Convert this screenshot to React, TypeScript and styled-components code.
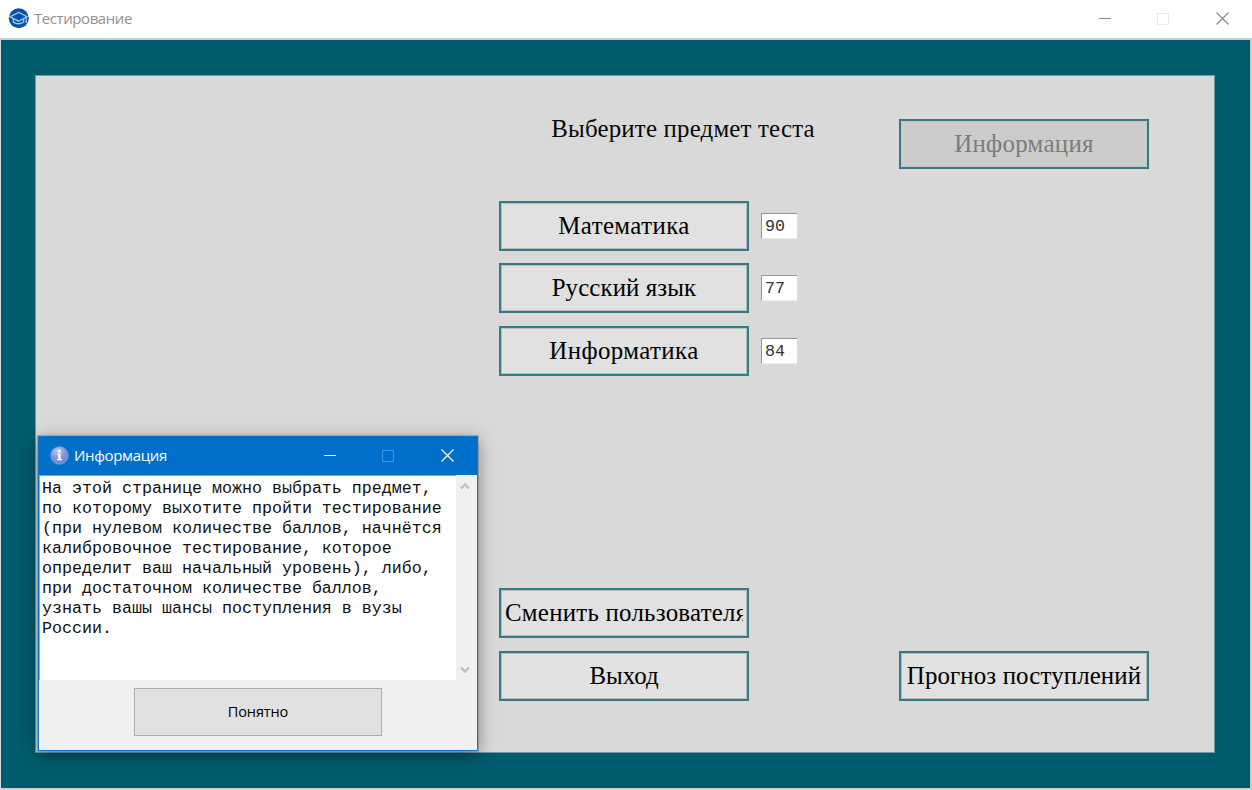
import React from "react";
import styled, { createGlobalStyle } from "styled-components";

const Global = createGlobalStyle`
  * { box-sizing: border-box; }
  html, body { margin: 0; background: #fff; overflow: hidden; }
  button { margin: 0; }
`;

const Window = styled.div`
  position: relative;
  width: 1252px;
  height: 790px;
  display: flex;
  flex-direction: column;
  background: #fff;
`;

const TitleBar = styled.header`
  height: 38px;
  display: flex;
  align-items: center;
  padding: 0 23px 1px 8px;
  font: 15px/20px "Open Sans", "Noto Sans", sans-serif;
  color: #929292;
`;

const Caption = styled.span<{ $spacing: number }>`
  margin-left: 5px;
  padding-bottom: 2px;
  white-space: nowrap;
  letter-spacing: ${(p) => p.$spacing}px;
`;

const Controls = styled.div`
  margin-left: auto;
  display: grid;
  grid-template-columns: 58px 59px 13px;
  align-items: center;
`;

const Client = styled.main`
  height: 752px;
  padding: 35px 36px 35px 34px;
  background: #005b6c;
  border: solid;
  border-width: 2px 2px 2px 1px;
  border-color: #c9cccd #c4c8c9 #c8d3d5 #d2d9da;
`;

const Panel = styled.section`
  width: 1180px;
  height: 678px;
  padding: 43px 65px 51px 463px;
  display: flex;
  justify-content: space-between;
  background: #d9d9d9;
  border: 1px solid #6d9ca4;
`;

const Column = styled.div<{ $width: number }>`
  width: ${(p) => p.$width}px;
  display: flex;
  flex-direction: column;
`;

const RightColumn = styled(Column)`
  justify-content: space-between;
`;

const Heading = styled.h1`
  margin: -5px 0 0;
  width: 368px;
  height: 30px;
  text-align: center;
  white-space: nowrap;
  font: 400 24.9px/30px "Liberation Serif", serif;
  letter-spacing: 0.18px;
  color: #080808;
`;

const Subjects = styled.div`
  margin-top: 56.5px;
  display: flex;
  flex-direction: column;
  gap: 12.5px;
`;

const Actions = styled(Subjects)`
  margin-top: auto;
  gap: 13px;
`;

const SubjectRow = styled.div`
  display: flex;
  align-items: center;
  gap: 12px;
`;

const MenuButton = styled.button<{ $spacing?: number }>`
  flex: none;
  width: 250px;
  height: 50px;
  padding: 0 4px;
  border: 2px solid #347b85;
  background: #e1e1e1;
  box-shadow: inset 0 0 0 1px #b9bdbd;
  font: 24.9px/30px "Liberation Serif", serif;
  letter-spacing: ${(p) => p.$spacing ?? 0}px;
  color: #000;
  &:disabled {
    background: #cccccc;
    box-shadow: inset 0 0 0 1px #c3c7c7;
    color: #7c7c7c;
  }
`;

const ButtonText = styled.span`
  display: flex;
  justify-content: safe center;
  overflow: hidden;
  white-space: nowrap;
`;

const Score = styled.output`
  flex: none;
  width: 36px;
  height: 26px;
  padding: 1px 0 0 3px;
  background: #fff;
  border: solid;
  border-width: 1px 0 1px 1px;
  border-color: #969696 #fff #eee #969696;
  font: 16.67px/23px "Liberation Mono", monospace;
  color: #333;
`;

const Dialog = styled.aside`
  position: absolute;
  left: 38px;
  top: 436px;
  width: 440px;
  height: 315px;
  border: 1px solid #0f74ca;
  background: #f0f0f0;
  box-shadow: 0 0 0 1px rgba(120, 120, 120, 0.45), 0 4px 16px rgba(0, 0, 0, 0.42);
`;

const DialogBar = styled.header`
  height: 38px;
  display: flex;
  align-items: center;
  padding: 0 23px 1px 11px;
  background: #006fc9;
  color: #fff;
  font: 15px/20px "Open Sans", "Noto Sans", sans-serif;
`;

const Body = styled.div`
  display: flex;
  height: 205px;
`;

const Message = styled.div`
  width: 417px;
  padding: 3px 0 0 2px;
  background: #fff;
  border-top: 1px solid #999;
  border-left: 1px solid #a5a5a5;
  white-space: pre;
  font: 16.667px/20px "Liberation Mono", monospace;
  color: #111;
`;

const ScrollBar = styled.div`
  width: 21px;
  padding: 7px 3px 6px 0;
  display: flex;
  flex-direction: column;
  align-items: center;
  justify-content: space-between;
  background: #f0f0f0;
`;

const Footer = styled.footer`
  display: flex;
  justify-content: center;
  padding-top: 8px;
`;

const OkButton = styled.button`
  width: 248px;
  height: 48px;
  padding: 0;
  border: 1px solid #adadad;
  background: #e1e1e1;
  font: 14.5px/20px "Open Sans", "Noto Sans", sans-serif;
  letter-spacing: -0.1px;
  color: #000;
`;

const WindowControls = ({ line, box, cross }: { line: string; box: string; cross: string }) => (
  <Controls>
    <svg width="12" height="12"><path d="M0 5.5H12" stroke={line} /></svg>
    <svg width="12" height="12"><rect x=".5" y=".5" width="11" height="11" fill="none" stroke={box} /></svg>
    <svg width="13" height="13"><path d="M.5 .5L12.5 12.5M12.5 .5L.5 12.5" stroke={cross} strokeWidth="1.1" /></svg>
  </Controls>
);

const CapIcon = () => (
  <svg width="21" height="21" viewBox="0 0 21 21" fill="none">
    <circle cx="10.8" cy="10.3" r="10" fill="#0553a6" />
    <path d="M2 8.8L10.6 4.4L19 8.5L10.6 13.2Z" stroke="#a9c9e8" strokeWidth="1.3" />
    <path d="M5.4 11V14.3Q10.5 17.2 15.6 14.3V11M18.2 9V15" stroke="#a9c9e8" strokeWidth="1.3" />
  </svg>
);

const InfoIcon = () => (
  <svg width="19" height="19" viewBox="0 0 19 19">
    <defs>
      <radialGradient id="orb" cx=".4" cy=".25" r=".8">
        <stop offset="0" stopColor="#bcc9f1" />
        <stop offset=".55" stopColor="#8295db" />
        <stop offset="1" stopColor="#6a83cc" />
      </radialGradient>
    </defs>
    <circle cx="9.5" cy="9.5" r="8.8" fill="url(#orb)" stroke="#7d9dd6" strokeWidth=".8" />
    <circle cx="9.4" cy="5" r="1.5" fill="#fff" />
    <path d="M7.2 7.6H10.6V13H12V14.2H7V13H8.3V8.8H7.2Z" fill="#fff" />
  </svg>
);

const subjects = [
  { name: "Математика", score: 90, spacing: 0.4 },
  { name: "Русский язык", score: 77, spacing: 0.1 },
  { name: "Информатика", score: 84, spacing: 0.4 },
];

const message = `На этой странице можно выбрать предмет,
по которому выхотите пройти тестирование
(при нулевом количестве баллов, начнётся
калибровочное тестирование, которое
определит ваш начальный уровень), либо,
при достаточном количестве баллов,
узнать вашы шансы поступления в вузы
России.`;

export default function App() {
  return (
    <>
      <Global />
      <Window>
        <TitleBar>
          <CapIcon />
          <Caption $spacing={-0.43}>Тестирование</Caption>
          <WindowControls line="#8c8c8c" box="#e9e9e9" cross="#858585" />
        </TitleBar>
        <Client>
          <Panel>
            <Column $width={298}>
              <Heading>Выберите предмет теста</Heading>
              <Subjects>
                {subjects.map((s) => (
                  <SubjectRow key={s.name}>
                    <MenuButton $spacing={s.spacing}><ButtonText>{s.name}</ButtonText></MenuButton>
                    <Score>{s.score}</Score>
                  </SubjectRow>
                ))}
              </Subjects>
              <Actions>
                <MenuButton $spacing={0.25}><ButtonText>Сменить пользователя</ButtonText></MenuButton>
                <MenuButton><ButtonText>Выход</ButtonText></MenuButton>
              </Actions>
            </Column>
            <RightColumn $width={250}>
              <MenuButton disabled $spacing={0.3}><ButtonText>Информация</ButtonText></MenuButton>
              <MenuButton $spacing={0.12}><ButtonText>Прогноз поступлений</ButtonText></MenuButton>
            </RightColumn>
          </Panel>
        </Client>
        <Dialog>
          <DialogBar>
            <InfoIcon />
            <Caption $spacing={-0.35}>Информация</Caption>
            <WindowControls line="#fff" box="#3f97dc" cross="#fff" />
          </DialogBar>
          <Body>
            <Message>{message}</Message>
            <ScrollBar>
              <svg width="10" height="8"><path d="M1 6.5L5 2.5L9 6.5" fill="none" stroke="#bfbfbf" strokeWidth="2.4" /></svg>
              <svg width="10" height="8"><path d="M1 1.5L5 5.5L9 1.5" fill="none" stroke="#bfbfbf" strokeWidth="2.4" /></svg>
            </ScrollBar>
          </Body>
          <Footer>
            <OkButton>Понятно</OkButton>
          </Footer>
        </Dialog>
      </Window>
    </>
  );
}
